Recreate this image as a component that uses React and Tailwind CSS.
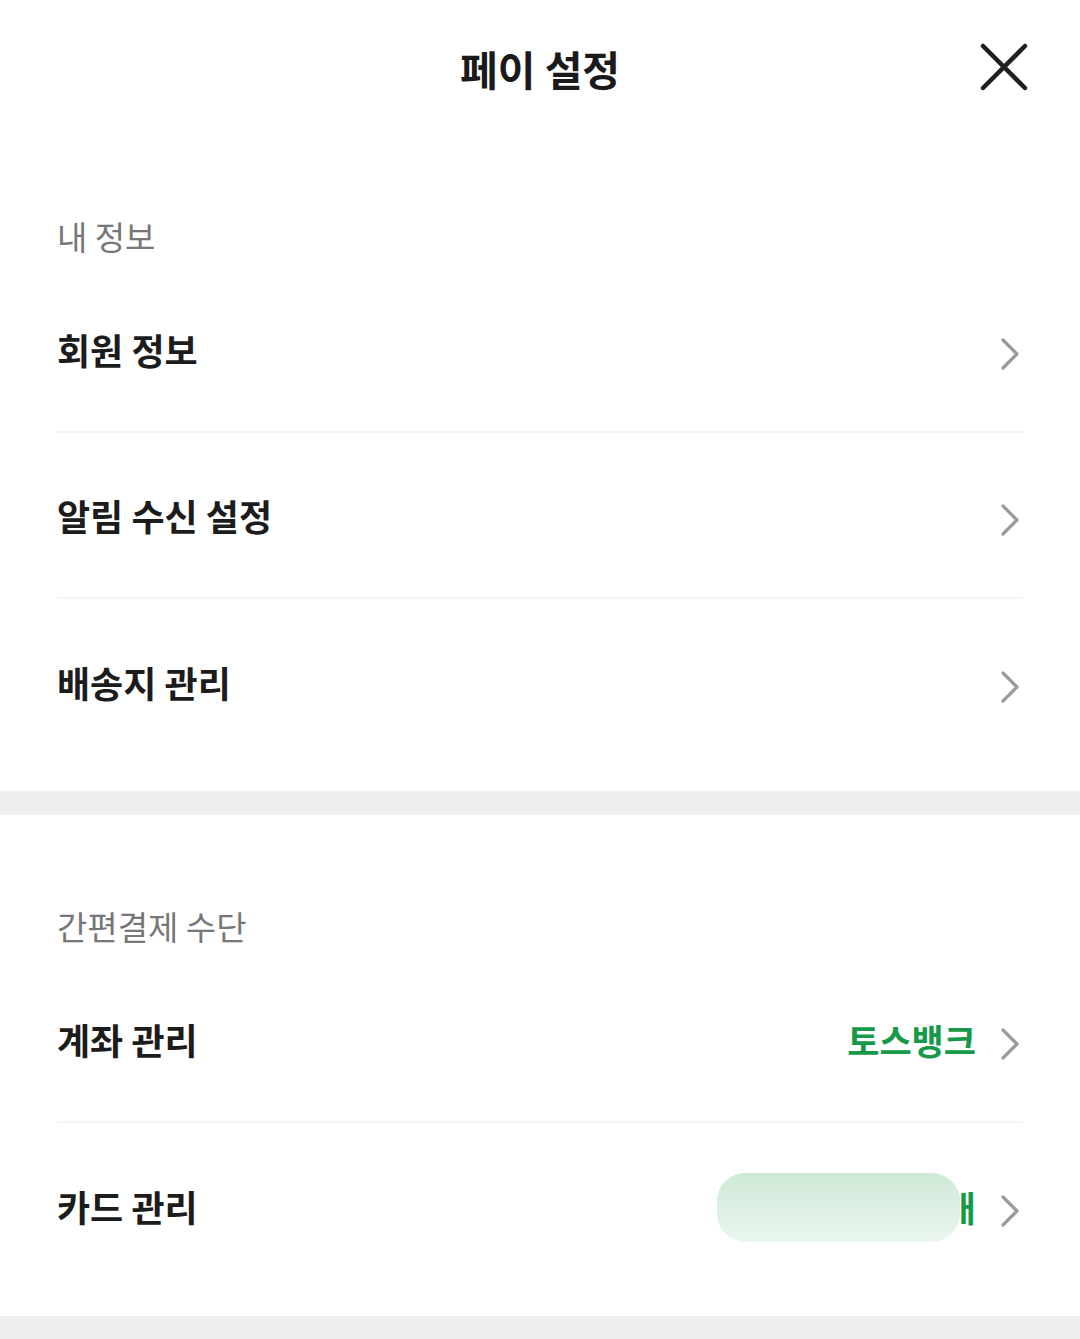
import React from 'react';

const font = { fontFamily: '"Noto Sans CJK KR", "Noto Sans", sans-serif' };

function Chevron() {
  return (
    <svg width="20" height="32" viewBox="0 0 20 32" fill="none" className="mt-[10px] shrink-0">
      <path d="M3 2 L17 16 L3 30" stroke="#9a9a9a" strokeWidth="3.2" strokeLinecap="round" strokeLinejoin="round" />
    </svg>
  );
}

function Row({ label, value, masked, last }) {
  return (
    <div className={`flex h-[166px] items-center justify-between ${last ? '' : 'border-b-2 border-[#f3f3f3]'}`}>
      <span className="text-[36px] font-bold leading-none text-[#1c1c1c]">{label}</span>
      <div className="flex items-center gap-[24px] pr-[3px]">
        {value && (
          <span className="relative text-[35px] font-bold leading-none text-[#17994a]">
            {value}
            {masked && (
              <span className="absolute left-[-29px] right-[16px] top-[-16px] bottom-[-18px] rounded-[28px] bg-linear-to-b from-[#cfe9d8] to-[#eaf6ee]" />
            )}
          </span>
        )}
        <Chevron />
      </div>
    </div>
  );
}

export default function App() {
  return (
    <div className="min-h-[1339px] w-[1080px] bg-white" style={font}>
      {/* Header */}
      <div className="relative flex h-[136px] items-center justify-center">
        <h1 className="text-[41px] font-bold leading-none text-[#1a1a1a]">페이 설정</h1>
        <svg className="absolute left-[980px] top-[43px]" width="48" height="48" viewBox="0 0 48 48" fill="none">
          <path d="M3 3 L45 45 M45 3 L3 45" stroke="#1f1f1f" strokeWidth="4.5" strokeLinecap="round" />
        </svg>
      </div>

      {/* 내 정보 */}
      <div className="px-[57px]">
        <div className="pt-[80px] pb-[11px] text-[33px] leading-[40px] text-[#777777]">내 정보</div>
        <Row label="회원 정보" />
        <Row label="알림 수신 설정" />
        <Row label="배송지 관리" last />
      </div>

      <div className="mt-[26px] h-[24px] bg-[#eeeeee]" />

      {/* 간편결제 수단 */}
      <div className="px-[57px]">
        <div className="pt-[91px] pb-[11px] text-[33px] leading-[40px] text-[#777777]">간편결제 수단</div>
        <Row label="계좌 관리" value="토스뱅크" />
        <Row label="카드 관리" value="등록된 카드 1개" masked last />
      </div>

      <div className="mt-[27px] h-[23px] bg-[#eeeeee]" />
    </div>
  );
}
